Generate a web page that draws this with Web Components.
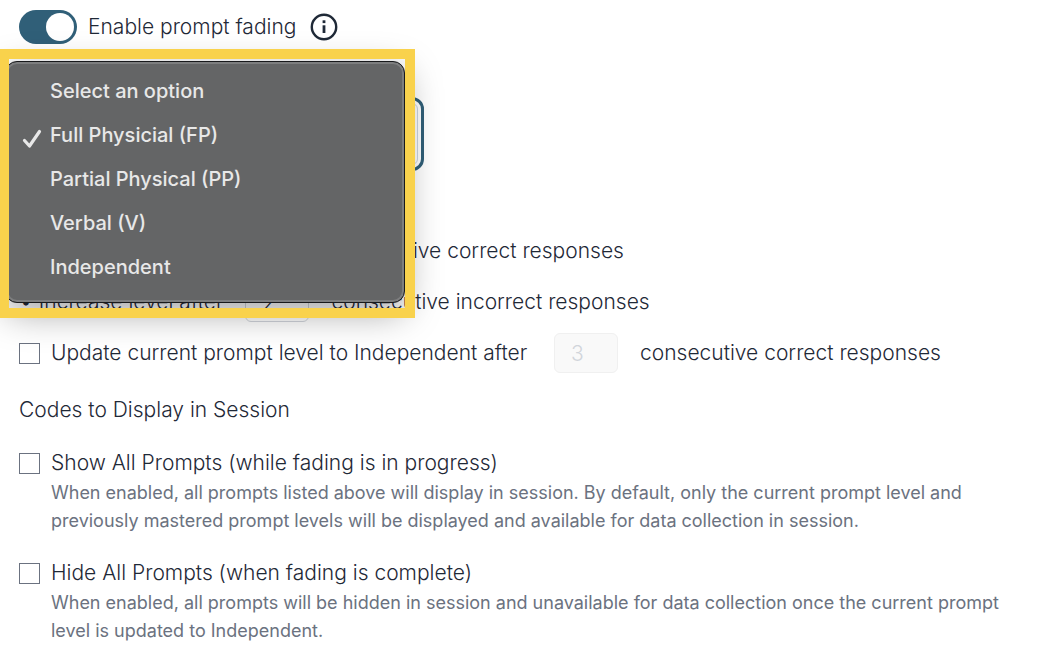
<!DOCTYPE html>
<html lang="en">
<head>
<meta charset="utf-8">
<title>Prompt fading</title>
<style>
  body { margin: 0; background: #fff; color: #1f2937; font-family: Inter, "Open Sans", sans-serif; font-weight: 300; font-size: 21px; line-height: 32px; }
</style>
</head>
<body>
<fading-settings></fading-settings>
<script>
  const define = (name, html, setup) => customElements.define(name, class extends HTMLElement {
    constructor() {
      super();
      this.attachShadow({ mode: 'open' }).innerHTML = html;
    }
    connectedCallback() { if (setup) setup(this, this.shadowRoot); }
  });

  define('toggle-switch', `
    <style>
      :host { display: block; }
      label { display: flex; align-items: center; gap: 11px; }
      input { appearance: none; flex: none; box-sizing: border-box; width: 58px; height: 34px; margin: 0; padding: 3px; border-radius: 17px; background: #305f78; display: flex; }
      input::before { content: ""; width: 28px; height: 28px; border-radius: 50%; background: #fff; }
      input:checked { justify-content: flex-end; }
    </style>
    <label><input type="checkbox" role="switch" checked><span><slot></slot></span></label>`);

  define('info-button', `
    <style>
      :host { display: block; }
      button { display: block; border: 0; padding: 0; background: none; color: #1f2937; }
      svg { display: block; }
    </style>
    <button type="button" aria-label="More information">
      <svg width="28" height="28" viewBox="0 0 28 28" fill="none" stroke="currentColor">
        <circle cx="14" cy="14" r="12.2" stroke-width="2.4"/>
        <path d="M14 12.3V20" stroke-width="2.8"/><path d="M14 7.3v2.8" stroke-width="2.8"/>
      </svg>
    </button>`);

  define('level-select', `
    <style>
      :host { display: block; }
      select { appearance: none; display: block; box-sizing: border-box; width: 100%; height: 74px; padding: 0 32px; border: 3px solid #305f78; border-radius: 12px; outline: 1px solid #cbd5e1; outline-offset: -7px; background: #fff; color: transparent; font: inherit; }
    </style>
    <select aria-label="Current prompt level">
      <option>Select an option</option>
      <option selected>Full Physicial (FP)</option>
      <option>Partial Physical (PP)</option>
      <option>Verbal (V)</option>
      <option>Independent</option>
    </select>`);

  define('menu-option', `
    <style>
      :host { display: block; }
      button { display: flex; align-items: center; gap: 8px; width: 100%; height: 44px; padding: 0 0 0 16px; border: 0; background: none; color: #e8e8e8; font: inherit; text-align: left; }
      svg { visibility: hidden; flex: none; margin-top: 8px; }
      :host([selected]) svg { visibility: visible; }
    </style>
    <button type="button" role="option">
      <svg width="20" height="20" viewBox="0 0 20 20" fill="none" stroke="currentColor" stroke-width="3.2" stroke-linecap="round" stroke-linejoin="round"><path d="M2.500 11.500l5 5.500L17.500 2.500"/></svg>
      <slot></slot>
    </button>`,
    (host, root) => root.querySelector('button').setAttribute('aria-selected', host.hasAttribute('selected')));

  define('option-menu', `
    <style>
      :host { display: block; box-sizing: border-box; padding: 7px 0 13px; border: 1px solid #18191b; border-radius: 12px; background: #646566; box-shadow: inset 0 0 0 2px #7d7e7f, 0 10px 36px rgba(0,0,0,.36); font-size: 20px; font-weight: 500; line-height: 28px; }
    </style>
    <div role="listbox" aria-label="Prompt levels"><slot></slot></div>`);

  define('count-rule', `
    <style>
      :host { display: flex; align-items: center; }
      label { display: flex; align-items: center; gap: 11px; box-sizing: border-box; min-width: var(--label); white-space: nowrap; }
      .tick { appearance: none; flex: none; box-sizing: border-box; width: 21px; height: 21px; margin: 0; border: 1px solid #6b7280; background: #fff; }
      .count { flex: none; box-sizing: border-box; width: 64px; height: 40px; margin: 0 22px; padding: 0 16px; border: 1px solid #d1d5db; border-radius: 6px; background: #fff; color: #1f2937; font: inherit; }
      .count:disabled { background: #f9f9f9; border-color: #f0f0f0; color: #d1d5db; }
      .after { white-space: nowrap; }
      :host([bullet]) label { gap: 7px; padding-left: 1px; }
    </style>
    <label for="main"></label>
    <input class="count" type="text" aria-label="Number of responses">
    <span class="after"><slot></slot></span>`,
    (host, root) => {
      const label = root.querySelector('label'), count = root.querySelector('.count');
      count.value = host.getAttribute('value');
      if (host.hasAttribute('bullet')) {
        count.id = 'main';
        label.innerHTML = '<span aria-hidden="true">•</span><span></span>';
      } else {
        count.disabled = true;
        label.innerHTML = '<input class="tick" id="main" type="checkbox"><span></span>';
      }
      label.lastElementChild.textContent = host.getAttribute('label') || '';
    });

  define('check-option', `
    <style>
      :host { display: grid; grid-template-columns: 21px 1fr; column-gap: 11px; align-items: center; }
      input { appearance: none; box-sizing: border-box; width: 21px; height: 21px; margin: 0; border: 1px solid #6b7280; background: #fff; }
      p { grid-column: 2; margin: 0; color: #6b7280; font-size: 18px; font-weight: 400; line-height: 28px; }
    </style>
    <input type="checkbox" id="box"><label for="box"><slot name="label"></slot></label>
    <p><slot></slot></p>`);

  define('fading-settings', `
    <style>
      :host { display: block; position: relative; padding: 8px 19px 14px; }
      header { display: flex; align-items: center; gap: 14px; height: 38px; }
      level-select { max-width: 405px; margin-top: 51px; }
      .rules { display: grid; gap: 11px; margin-top: 60px; }
      h2 { margin: 21px 0; font: inherit; }
      .codes { display: grid; gap: 22px; }
      /* the open menu and the frame that calls it out */
      .callout { position: absolute; top: 49px; left: 0; box-sizing: border-box; width: 415px; height: 269px; padding: 12px 10px 0 9px; }
      .callout::after { content: ""; position: absolute; inset: 0; border: 10px solid #f9d24c; border-left-width: 9px; pointer-events: none; }
      option-menu { height: 242px; margin-left: -4px; }
    </style>
    <header><toggle-switch>Enable prompt fading</toggle-switch><info-button></info-button></header>
    <level-select></level-select>
    <div class="rules">
      <count-rule bullet value="2" style="--label: 196px">consecutive correct responses</count-rule>
      <count-rule bullet label="Increase level after" value="2" style="--label: 202px">consecutive incorrect responses</count-rule>
      <count-rule label="Update current prompt level to Independent after" value="3" style="--label: 513px">consecutive correct responses</count-rule>
    </div>
    <h2>Codes to Display in Session</h2>
    <div class="codes">
      <check-option><span slot="label">Show All Prompts (while fading is in progress)</span>When enabled, all prompts listed above will display in session. By default, only the current prompt level and previously mastered prompt levels will be displayed and available for data collection in session.</check-option>
      <check-option><span slot="label">Hide All Prompts (when fading is complete)</span>When enabled, all prompts will be hidden in session and unavailable for data collection once the current prompt level is updated to Independent.</check-option>
    </div>
    <div class="callout">
      <option-menu>
        <menu-option>Select an option</menu-option>
        <menu-option selected>Full Physicial (FP)</menu-option>
        <menu-option>Partial Physical (PP)</menu-option>
        <menu-option>Verbal (V)</menu-option>
        <menu-option>Independent</menu-option>
      </option-menu>
    </div>`);
</script>
</body>
</html>
